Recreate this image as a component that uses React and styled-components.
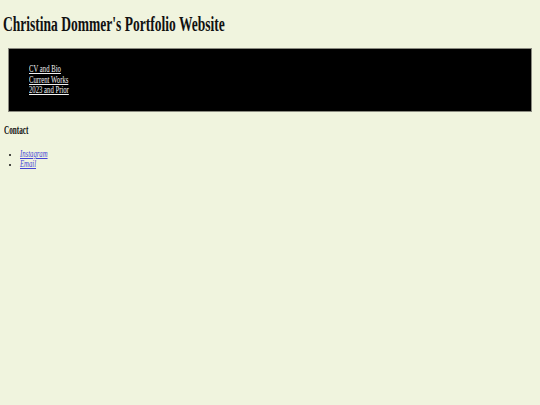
import React from 'react';
import styled, { createGlobalStyle } from 'styled-components';

const GlobalStyle = createGlobalStyle`
  html, body {
    margin: 0;
    padding: 0;
    background: #f0f4de;
  }
  body {
    font-family: "Liberation Serif", "Times New Roman", serif;
    color: #111;
  }
`;

const Page = styled.div`
  padding: 0 0 0 3px;
`;

// narrow face: the serif is squeezed horizontally
const Squeeze = styled.span`
  display: inline-block;
  transform: scaleX(${p => p.$x || 0.67});
  transform-origin: left center;
  white-space: nowrap;
  text-decoration: ${p => (p.$line ? 'underline' : 'none')};
`;

const Title = styled.h1`
  margin: 0;
  padding-top: 12px;
  font-size: 20.5px;
  line-height: 24px;
  font-weight: bold;
`;

const Nav = styled.nav`
  margin: 12px 8px 0 5px;
  height: 64px;
  background: #000;
  border: 1px solid #8a8a80;
  box-sizing: border-box;
  padding: 15px 0 0 20px;
`;

const NavList = styled.ul`
  list-style: none;
  margin: 0;
  padding: 0;
`;

const NavLink = styled.a`
  display: block;
  color: #f2f2f2;
  font-size: 10px;
  line-height: 10.5px;
`;

const Heading = styled.h3`
  margin: 11px 0 0 1px;
  font-size: 12px;
  line-height: 14px;
  font-weight: bold;
`;

const Links = styled.ul`
  margin: 12px 0 0;
  padding: 0 0 0 17px;
  font-size: 10px;
  line-height: 10px;
  li::marker {
    font-size: 8px;
    color: #111;
  }
`;

const Social = styled.a`
  color: #4343d6;
  font-style: italic;
`;

export default function App() {
  return (
    <Page>
      <GlobalStyle />
      <Title><Squeeze $x={0.66}>Christina Dommer's Portfolio Website</Squeeze></Title>
      <Nav>
        <NavList>
          <li><NavLink href="#"><Squeeze $line>CV and Bio</Squeeze></NavLink></li>
          <li><NavLink href="#"><Squeeze $line>Current Works</Squeeze></NavLink></li>
          <li><NavLink href="#"><Squeeze $line>2023 and Prior</Squeeze></NavLink></li>
        </NavList>
      </Nav>
      <Heading><Squeeze $x={0.6}>Contact</Squeeze></Heading>
      <Links>
        <li><Social href="#"><Squeeze $line>Instagram</Squeeze></Social></li>
        <li><Social href="#"><Squeeze $line>Email</Squeeze></Social></li>
      </Links>
    </Page>
  );
}
